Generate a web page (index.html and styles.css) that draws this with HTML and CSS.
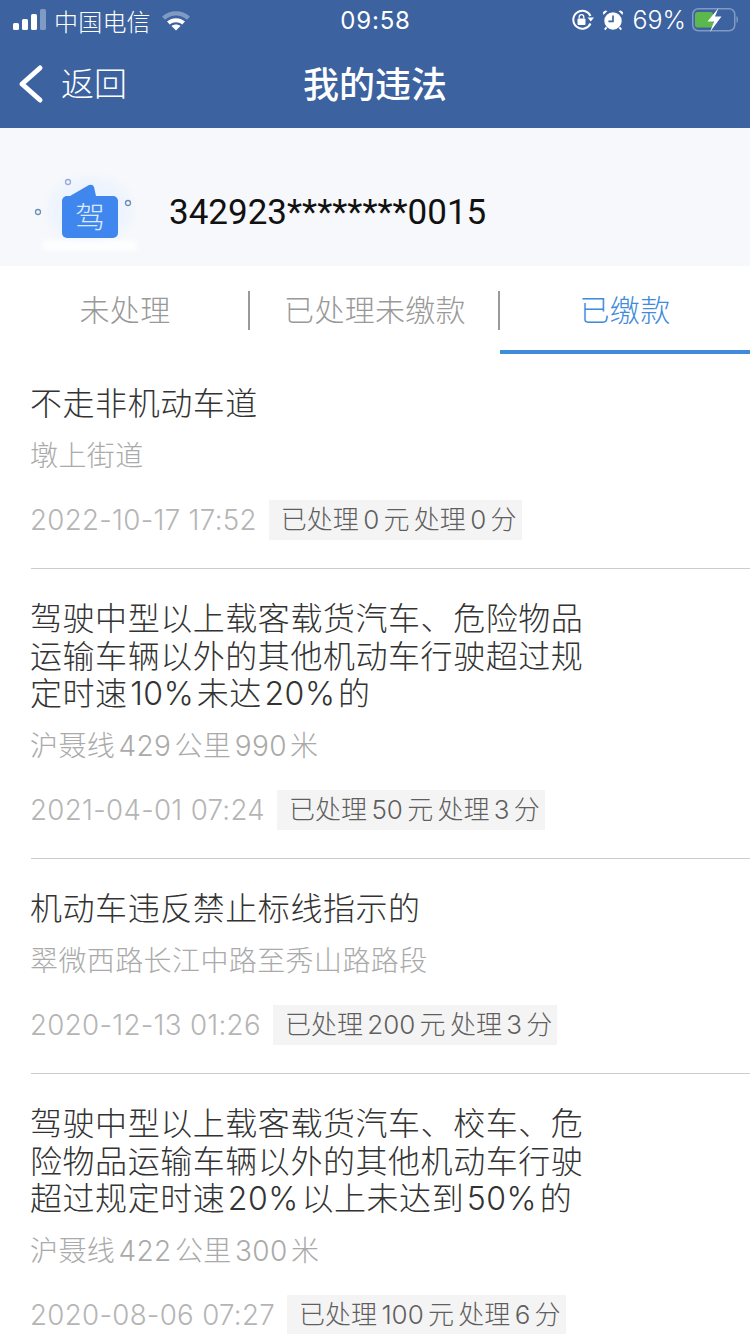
FILE: index.html
```html
<!DOCTYPE html>
<html lang="zh-CN">
<head>
    <meta charset="UTF-8">
    <meta name="viewport" content="width=device-width, initial-scale=1.0">
    <title>我的违法</title>
    <link rel="stylesheet" href="styles.css">
</head>
<body>
    <header class="top">
        <div class="status">
            <div class="status-left">
                <svg class="signal" width="36" height="24" viewBox="0 0 36 24">
                    <rect x="0" y="15" width="6" height="7" rx="1.5" fill="#fff"/>
                    <rect x="9" y="11" width="6" height="11" rx="1.5" fill="#fff"/>
                    <rect x="18" y="6" width="6" height="16" rx="1.5" fill="#fff"/>
                    <rect x="27" y="1" width="6" height="21" rx="1.5" fill="#7f9ac3"/>
                </svg>
                <span class="carrier">中国电信</span>
                <svg class="wifi" width="30" height="22" viewBox="0 0 30 22">
                    <path d="M1 7.500C9 .5 21 .5 29 7.500l-3 3.200C19.500 5 10.500 5 4 10.700z" fill="#7f9ac3"/>
                    <path d="M6 12.500C11 8 19 8 24 12.500l-2.800 3C17.500 12.500 12.500 12.500 8.800 15.500z" fill="#fff"/>
                    <path d="M10.500 17C13 15 17 15 19.500 17L15 21.500z" fill="#fff"/>
                </svg>
            </div>
            <span class="clock">09:58</span>
            <div class="status-right">
                <svg class="lock" width="24" height="24" viewBox="0 0 24 24">
                    <path d="M20.500 15.500A9 9 0 1 1 20.500 8" fill="none" stroke="#fff" stroke-width="2"/>
                    <path d="M17.500 9.500h6.500l-3.200 4z" fill="#fff"/>
                    <rect x="7.500" y="10.500" width="8" height="6.500" rx="1" fill="#fff"/>
                    <path d="M9.200 10.500V9a2.300 2.300 0 0 1 4.600 0v1.500" fill="none" stroke="#fff" stroke-width="1.300"/>
                </svg>
                <svg class="alarm" width="22" height="24" viewBox="0 0 24 24">
                    <circle cx="12" cy="13" r="9.500" fill="#fff"/>
                    <path d="M12 7v6.500H7" fill="none" stroke="#3c629f" stroke-width="1.800"/>
                    <path d="M1.500 6.500 6 2.200 3.500 1.500 1 3.500zM22.500 6.500 18 2.200l2.500-.7 2.500 2z" fill="#fff"/>
                    <path d="M5 20l-2 2.500M19 20l2 2.500" stroke="#fff" stroke-width="2"/>
                </svg>
                <span class="percent">69%</span>
                <svg class="battery" width="46" height="28" viewBox="0 0 46 28">
                    <rect x=".75" y="2.750" width="42" height="22" rx="5.500" fill="none" stroke="#7f9ac3" stroke-width="1.500"/>
                    <rect x="3" y="6" width="18" height="15.500" rx="2.500" fill="#5cb84d"/>
                    <path d="M44.500 10c1 .5 1.500 1.500 1.500 3.500s-.5 3-1.500 3.500z" fill="#7f9ac3"/>
                    <path d="M26.500 2 15.500 15.500h6.500L18 26 29.500 10.500H23z" fill="#fff"/>
                </svg>
            </div>
        </div>
        <nav class="nav">
            <a class="back">
                <svg width="28" height="40" viewBox="0 0 28 40">
                    <path d="M23 4 5 20l18 16" fill="none" stroke="#fff" stroke-width="5" stroke-linecap="round" stroke-linejoin="round"/>
                </svg>
                <span>返回</span>
            </a>
            <h1>我的违法</h1>
        </nav>
    </header>

    <section class="licence">
        <svg class="licence-icon" width="110" height="80" viewBox="0 0 110 80">
            <ellipse class="soft" cx="60" cy="38" rx="42" ry="33" fill="#eef4fd"/>
            <rect class="soft" x="12" y="69" width="95" height="9" fill="#fff"/>
            <path d="M40 24 59 13q4-1 5 2l2 9z" fill="#3f87ee"/>
            <rect x="32" y="24" width="56" height="42" rx="5" fill="#3f87ee"/>
            <circle cx="38" cy="10" r="2.500" fill="none" stroke="#9aa9d8" stroke-width="1.300"/>
            <circle cx="98" cy="31" r="2.500" fill="none" stroke="#6f8fb8" stroke-width="1.300"/>
            <circle cx="8" cy="40" r="2.500" fill="none" stroke="#6f8fb8" stroke-width="1.300"/>
            <text class="licence-char" x="60" y="56" text-anchor="middle">驾</text>
        </svg>
        <span class="licence-no">342923********0015</span>
    </section>

    <div class="tabs">
        <div class="tab">未处理</div>
        <div class="tab">已处理未缴款</div>
        <div class="tab active">已缴款</div>
    </div>

    <main class="list">
        <article class="item">
            <h2>不走非机动车道</h2>
            <p class="place">墩上街道</p>
            <div class="meta">
                <time>2022-10-17 17:52</time>
                <span class="tag">已处理 0 元 处理 0 分</span>
            </div>
        </article>
        <article class="item">
            <h2>驾驶中型以上载客载货汽车、危险物品运输车辆以外的其他机动车行驶超过规定时速 10% 未达 20% 的</h2>
            <p class="place">沪聂线 429 公里 990 米</p>
            <div class="meta">
                <time>2021-04-01 07:24</time>
                <span class="tag">已处理 50 元 处理 3 分</span>
            </div>
        </article>
        <article class="item">
            <h2>机动车违反禁止标线指示的</h2>
            <p class="place">翠微西路长江中路至秀山路路段</p>
            <div class="meta">
                <time>2020-12-13 01:26</time>
                <span class="tag">已处理 200 元 处理 3 分</span>
            </div>
        </article>
        <article class="item">
            <h2>驾驶中型以上载客载货汽车、校车、危险物品运输车辆以外的其他机动车行驶超过规定时速 20% 以上未达到 50% 的</h2>
            <p class="place">沪聂线 422 公里 300 米</p>
            <div class="meta">
                <time>2020-08-06 07:27</time>
                <span class="tag">已处理 100 元 处理 6 分</span>
            </div>
        </article>
    </main>
</body>
</html>
```

FILE: styles.css
```css
* {
    box-sizing: border-box;
}
html, body {
    height: 1334px;
    overflow: hidden;
}
body {
    margin: 0;
    background-color: #fff;
    font-family: "Inter", "Noto Sans CJK SC", sans-serif;
}
.top {
    height: 128px;
    background-color: #3c629f;
    color: #fff;
}
.status {
    height: 40px;
    padding: 0 12px 0 13px;
    display: flex;
    align-items: center;
    justify-content: space-between;
}
.status-left, .status-right {
    display: flex;
    align-items: center;
    flex: 1;
}
.status-right {
    justify-content: flex-end;
}
.signal {
    margin-right: 5px;
}
.carrier {
    font-size: 24px;
    font-weight: 300;
    letter-spacing: .2px;
}
.wifi {
    margin-left: 10px;
}
.clock {
    font-size: 24px;
    letter-spacing: .8px;
}
.status-right svg {
    flex: none;
}
.alarm {
    margin-left: 8px;
}
.percent {
    font-size: 25px;
    font-weight: 300;
    margin: 0 6px 0 8px;
}
.nav {
    height: 88px;
    padding-bottom: 5px;
    display: flex;
    align-items: center;
    justify-content: center;
    position: relative;
}
.back {
    position: absolute;
    left: 17px;
    top: 24px;
    display: flex;
    align-items: center;
    font-size: 33px;
    font-weight: 300;
    line-height: 40px;
}
.back span {
    margin-left: 16px;
}
.nav h1 {
    margin: 0;
    font-size: 36px;
    font-weight: 500;
}
.licence {
    height: 138px;
    background-color: #f6f8fb;
    display: flex;
    align-items: center;
    padding: 30px 0 0 30px;
}
.licence-icon {
    margin-right: 29px;
    flex: none;
}
.soft {
    filter: blur(3px);
}
.licence-char {
    font-size: 30px;
    font-weight: 300;
    fill: #dbe9fd;
}
.licence-no {
    font-family: "Roboto", sans-serif;
    font-size: 35px;
    color: #111;
}
.tabs {
    height: 88px;
    display: flex;
}
.tab {
    flex: 1;
    position: relative;
    display: flex;
    align-items: center;
    justify-content: center;
    font-size: 30px;
    font-weight: 300;
    letter-spacing: .3px;
    color: #999;
    padding-bottom: 4px;
}
.tab + .tab::before {
    content: "";
    position: absolute;
    left: -2px;
    top: 25px;
    height: 39px;
    border-left: 2px solid #999;
}
.tab.active {
    color: #3f8cdc;
    border-bottom: 4px solid #3f8cdc;
    padding-bottom: 0;
}
.item {
    margin: 0 0 0 31px;
    padding: 31px 0 28.5px;
    border-bottom: 1px solid #ccc;
}
.item:last-child {
    border-bottom: 0;
}
.item h2 {
    margin: 0 0 0 -1px;
    width: 560px;
    font-size: 32px;
    font-weight: 300;
    line-height: 37.5px;
    color: #333;
    letter-spacing: .55px;
    word-spacing: -7px;
}
.place {
    margin: 15px 0 0 -1px;
    font-size: 28px;
    font-weight: 300;
    line-height: 36px;
    color: #aaa;
    letter-spacing: .4px;
    word-spacing: -5px;
}
.meta {
    margin: 26px 0 0 -1px;
    height: 40px;
    display: flex;
    align-items: center;
}
.meta time {
    font-size: 27.7px;
    font-weight: 300;
    letter-spacing: .3px;
    color: #b5b5b5;
}
.tag {
    margin-left: 12px;
    height: 40px;
    line-height: 40px;
    padding: 0 5px 0 12px;
    background-color: #f4f4f4;
    font-size: 26px;
    font-weight: 300;
    color: #5f5f5f;
    word-spacing: -3px;
}
```
